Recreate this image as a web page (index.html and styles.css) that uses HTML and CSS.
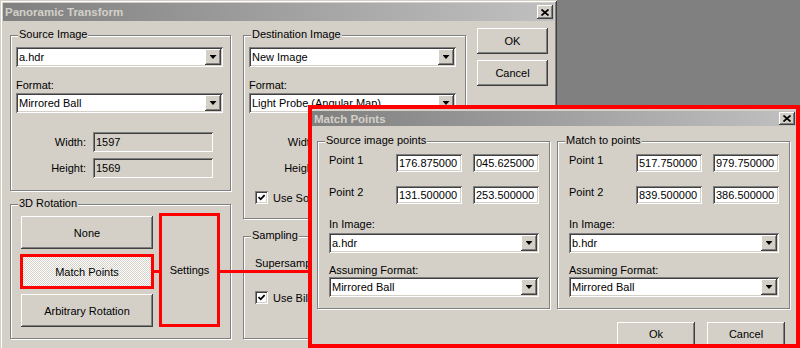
FILE: index.html
```html
<!DOCTYPE html>
<html lang="en">
<head>
    <meta charset="UTF-8">
    <meta name="viewport" content="width=device-width, initial-scale=1.0">
    <title>Panoramic Transform</title>
    <link rel="stylesheet" href="styles.css">
</head>
<body>

<!-- Main dialog -->
<div class="window main-window">
    <div class="titlebar">
        <span class="title">Panoramic Transform</span>
        <button class="close-btn"><svg width="8" height="7" viewBox="0 0 8 7"><path d="M0.5 0.5 L7.5 6.5 M7.5 0.5 L0.5 6.5" stroke="#000" stroke-width="1.7"/></svg></button>
    </div>
    <div class="main-body">
        <div class="left-col">
            <div class="group source-group">
                <span class="group-label">Source Image</span>
                <div class="combo"><span class="combo-text">a.hdr</span><span class="drop"></span></div>
                <div class="field-label">Format:</div>
                <div class="combo after-label"><span class="combo-text">Mirrored Ball</span><span class="drop"></span></div>
                <div class="size-row first"><span class="size-label">Width:</span><span class="edit readonly size-edit">1597</span></div>
                <div class="size-row"><span class="size-label">Height:</span><span class="edit readonly size-edit">1569</span></div>
            </div>
            <div class="group rotation-group">
                <span class="group-label">3D Rotation</span>
                <div class="rotation-buttons">
                    <button class="btn rot-btn">None</button>
                    <button class="btn rot-btn pushed">Match Points</button>
                    <button class="btn rot-btn">Arbitrary Rotation</button>
                </div>
                <button class="btn settings-btn">Settings</button>
            </div>
        </div>
        <div class="mid-col">
            <div class="group dest-group">
                <span class="group-label">Destination Image</span>
                <div class="combo"><span class="combo-text">New Image</span><span class="drop"></span></div>
                <div class="field-label">Format:</div>
                <div class="combo after-label"><span class="combo-text">Light Probe (Angular Map)</span><span class="drop"></span></div>
                <div class="size-row first"><span class="size-label">Width:</span><span class="edit size-edit"></span></div>
                <div class="size-row"><span class="size-label">Height:</span><span class="edit size-edit"></span></div>
                <div class="check-row dest-check"><span class="checkbox"><svg width="7" height="7" viewBox="0 0 7 7"><path d="M0.5 3 L2.7 5.3 L6.6 1" fill="none" stroke="#000" stroke-width="1.8"/></svg></span><span class="cut-text">Use Source Size</span></div>
            </div>
            <div class="group sampling-group">
                <span class="group-label">Sampling</span>
                <div class="field-label super-label"><span class="cut-text">Supersampling:</span></div>
                <div class="check-row sampling-check"><span class="checkbox"><svg width="7" height="7" viewBox="0 0 7 7"><path d="M0.5 3 L2.7 5.3 L6.6 1" fill="none" stroke="#000" stroke-width="1.8"/></svg></span><span class="cut-text">Use Bilinear Filtering</span></div>
            </div>
        </div>
        <div class="right-col">
            <button class="btn dlg-btn">OK</button>
            <button class="btn dlg-btn">Cancel</button>
        </div>
    </div>
</div>

<!-- red annotation lines -->
<div class="connector conn-a"></div>
<div class="connector conn-b"></div>

<!-- Match Points dialog, highlighted -->
<div class="popup-frame">
    <div class="window match-window">
        <div class="titlebar match-title">
            <span class="title">Match Points</span>
            <button class="close-btn"><svg width="8" height="7" viewBox="0 0 8 7"><path d="M0.5 0.5 L7.5 6.5 M7.5 0.5 L0.5 6.5" stroke="#000" stroke-width="1.7"/></svg></button>
        </div>
        <div class="match-groups">
            <div class="group point-group">
                <span class="group-label">Source image points</span>
                <div class="point-row"><span class="point-label">Point 1</span><span class="edit point-edit">176.875000</span><span class="edit point-edit">045.625000</span></div>
                <div class="point-row"><span class="point-label">Point 2</span><span class="edit point-edit">131.500000</span><span class="edit point-edit">253.500000</span></div>
                <div class="field-label in-label">In Image:</div>
                <div class="combo point-combo in-combo"><span class="combo-text">a.hdr</span><span class="drop"></span></div>
                <div class="field-label fmt-label">Assuming Format:</div>
                <div class="combo point-combo"><span class="combo-text">Mirrored Ball</span><span class="drop"></span></div>
            </div>
            <div class="group point-group">
                <span class="group-label">Match to points</span>
                <div class="point-row"><span class="point-label">Point 1</span><span class="edit point-edit">517.750000</span><span class="edit point-edit">979.750000</span></div>
                <div class="point-row"><span class="point-label">Point 2</span><span class="edit point-edit">839.500000</span><span class="edit point-edit">386.500000</span></div>
                <div class="field-label in-label">In Image:</div>
                <div class="combo point-combo in-combo"><span class="combo-text">b.hdr</span><span class="drop"></span></div>
                <div class="field-label fmt-label">Assuming Format:</div>
                <div class="combo point-combo"><span class="combo-text">Mirrored Ball</span><span class="drop"></span></div>
            </div>
        </div>
        <div class="match-actions">
            <button class="btn action-btn">Ok</button>
            <button class="btn action-btn">Cancel</button>
        </div>
    </div>
</div>

</body>
</html>
```

FILE: styles.css
```css
body {
    margin: 0;
    width: 800px;
    height: 348px;
    overflow: hidden;
    position: relative;
    background: #808080;
    font-family: "Liberation Sans", Arial, sans-serif;
    font-size: 11px;
    color: #000;
}

button {
    font: inherit;
    color: #000;
    border: none;
    padding: 0;
    margin: 0;
    background: #d4d0c8;
}

/* windows */
.window {
    box-sizing: border-box;
    background: #d4d0c8;
}

.main-window {
    width: 557px;
    height: 360px;
    padding: 3px;
    box-shadow: inset 1px 1px #d4d0c8, inset -1px -1px #404040, inset 2px 2px #fff, inset -2px -2px #808080;
}

.titlebar {
    display: flex;
    align-items: center;
    justify-content: space-between;
    height: 18px;
    padding: 0 1px 0 2px;
    background: linear-gradient(to right, #808080, #c0c0c0);
    color: #d4d0c8;
    font-weight: bold;
    font-size: 11.5px;
}

.close-btn {
    width: 16px;
    height: 14px;
    display: flex;
    align-items: center;
    justify-content: center;
    box-shadow: inset -1px -1px #404040, inset 1px 1px #fff, inset -2px -2px #808080;
}

/* bevels */
.btn,
.drop {
    display: flex;
    align-items: center;
    justify-content: center;
    box-shadow: inset -1px -1px #404040, inset 1px 1px #fff, inset -2px -2px #808080;
}

.edit,
.combo,
.checkbox {
    box-sizing: border-box;
    background: #fff;
    box-shadow: inset 1px 1px #808080, inset -1px -1px #fff, inset 2px 2px #404040, inset -2px -2px #d4d0c8;
}

/* group boxes */
.group {
    position: relative;
    box-sizing: border-box;
    border: 1px solid #808080;
    box-shadow: inset 1px 1px #fff, 1px 1px #fff;
}

.group-label {
    position: absolute;
    top: -8px;
    left: 7px;
    padding: 0 1px;
    line-height: 13px;
    background: #d4d0c8;
    white-space: nowrap;
}

.field-label {
    line-height: 14px;
    margin-top: 11px;
    white-space: nowrap;
}

/* text that runs under the Match Points window */
.cut-text {
    display: inline-block;
    max-width: 48px;
    overflow: hidden;
    white-space: nowrap;
}

/* combo boxes */
.combo {
    display: flex;
    align-items: center;
    width: 207px;
    height: 20px;
    padding: 2px;
}

.combo-text {
    flex: 1;
    padding-left: 1px;
    white-space: nowrap;
    overflow: hidden;
}

.drop {
    width: 16px;
    height: 16px;
    background: #d4d0c8;
}

.drop::after {
    content: "";
    width: 7px;
    height: 4px;
    background: #000;
    clip-path: polygon(0 0, 100% 0, 50% 100%);
}

.after-label {
    margin-top: 1px;
}

.edit {
    display: flex;
    align-items: center;
    padding: 0 3px;
    white-space: nowrap;
    overflow: hidden;
}

.readonly {
    background: #d4d0c8;
}

/* main layout */
.main-body {
    display: flex;
    align-items: flex-start;
    padding: 7px 0 0 7px;
}

.left-col {
    width: 221px;
    margin-top: 7px;
}

.mid-col {
    width: 223px;
    margin: 7px 0 0 12px;
}

.right-col {
    width: 71px;
    margin-left: 11px;
    display: flex;
    flex-direction: column;
    gap: 6px;
}

.dlg-btn {
    height: 26px;
}

.source-group,
.dest-group {
    padding: 11px 0 0 5px;
}

.source-group {
    height: 156px;
}

.dest-group {
    height: 184px;
}

.size-row {
    display: flex;
    align-items: center;
    gap: 7px;
    margin-top: 6px;
}

.size-row.first {
    margin-top: 19px;
}

.size-label {
    width: 70px;
    text-align: right;
}

.size-edit {
    width: 120px;
    height: 20px;
}

.check-row {
    display: flex;
    align-items: center;
    gap: 5px;
    height: 13px;
    white-space: nowrap;
}

.checkbox {
    width: 13px;
    height: 13px;
    display: flex;
    align-items: center;
    justify-content: center;
}

.dest-check {
    margin: 13px 0 0 6px;
}

.rotation-group {
    display: flex;
    align-items: flex-start;
    height: 135px;
    margin-top: 13px;
    padding: 11px 0 0 10px;
}

.rotation-buttons {
    display: flex;
    flex-direction: column;
    gap: 6px;
    width: 132px;
}

.rot-btn {
    height: 33px;
}

.pushed {
    background: repeating-conic-gradient(#fff 0 25%, #d4d0c8 0 50%) 0 0 / 2px 2px;
    box-shadow: none;
    outline: 3px solid #f00;
    outline-offset: -2px;
}

.settings-btn {
    width: 61px;
    height: 114px;
    margin: -3px 0 0 6px;
    box-sizing: border-box;
    border: 3px solid #f00;
    box-shadow: none;
}

.sampling-group {
    height: 103px;
    margin-top: 17px;
    padding: 19px 0 0 11px;
}

.super-label {
    margin-top: 0;
}

.super-label .cut-text {
    max-width: 54px;
}

.sampling-check {
    margin-top: 18px;
}

/* annotation lines */
.connector {
    position: absolute;
    top: 270px;
    height: 3px;
    background: #f00;
}

.conn-a {
    left: 154px;
    width: 5px;
}

.conn-b {
    left: 220px;
    width: 90px;
}

/* Match Points dialog */
.popup-frame {
    position: absolute;
    left: 308px;
    top: 105px;
    width: 492px;
    height: 243px;
    box-sizing: border-box;
    border: 4px solid #f00;
    overflow: hidden;
}

.match-window {
    height: 100%;
    padding-top: 2px;
}

.match-title {
    height: 15px;
}

.match-title .close-btn {
    height: 13px;
}

.match-groups {
    display: flex;
    gap: 7px;
    margin-top: 15px;
    padding-left: 5px;
}

.point-group {
    width: 233px;
    height: 168px;
    padding: 12px 0 0 11px;
}

.point-row {
    display: flex;
    align-items: flex-start;
    height: 18px;
}

.point-row + .point-row {
    margin-top: 14px;
}

.point-label {
    width: 67px;
    line-height: 13px;
}

.point-edit {
    width: 66px;
    height: 18px;
}

.point-edit + .point-edit {
    margin-left: 11px;
}

.in-label {
    margin-top: 14px;
    line-height: 13px;
}

.fmt-label {
    margin-top: 11px;
    line-height: 13px;
}

.point-combo {
    width: 210px;
}

.in-combo {
    margin-top: 2px;
}

.match-actions {
    display: flex;
    justify-content: flex-end;
    gap: 12px;
    margin-top: 13px;
    padding-right: 11px;
}

.action-btn {
    width: 78px;
    height: 24px;
}
```
